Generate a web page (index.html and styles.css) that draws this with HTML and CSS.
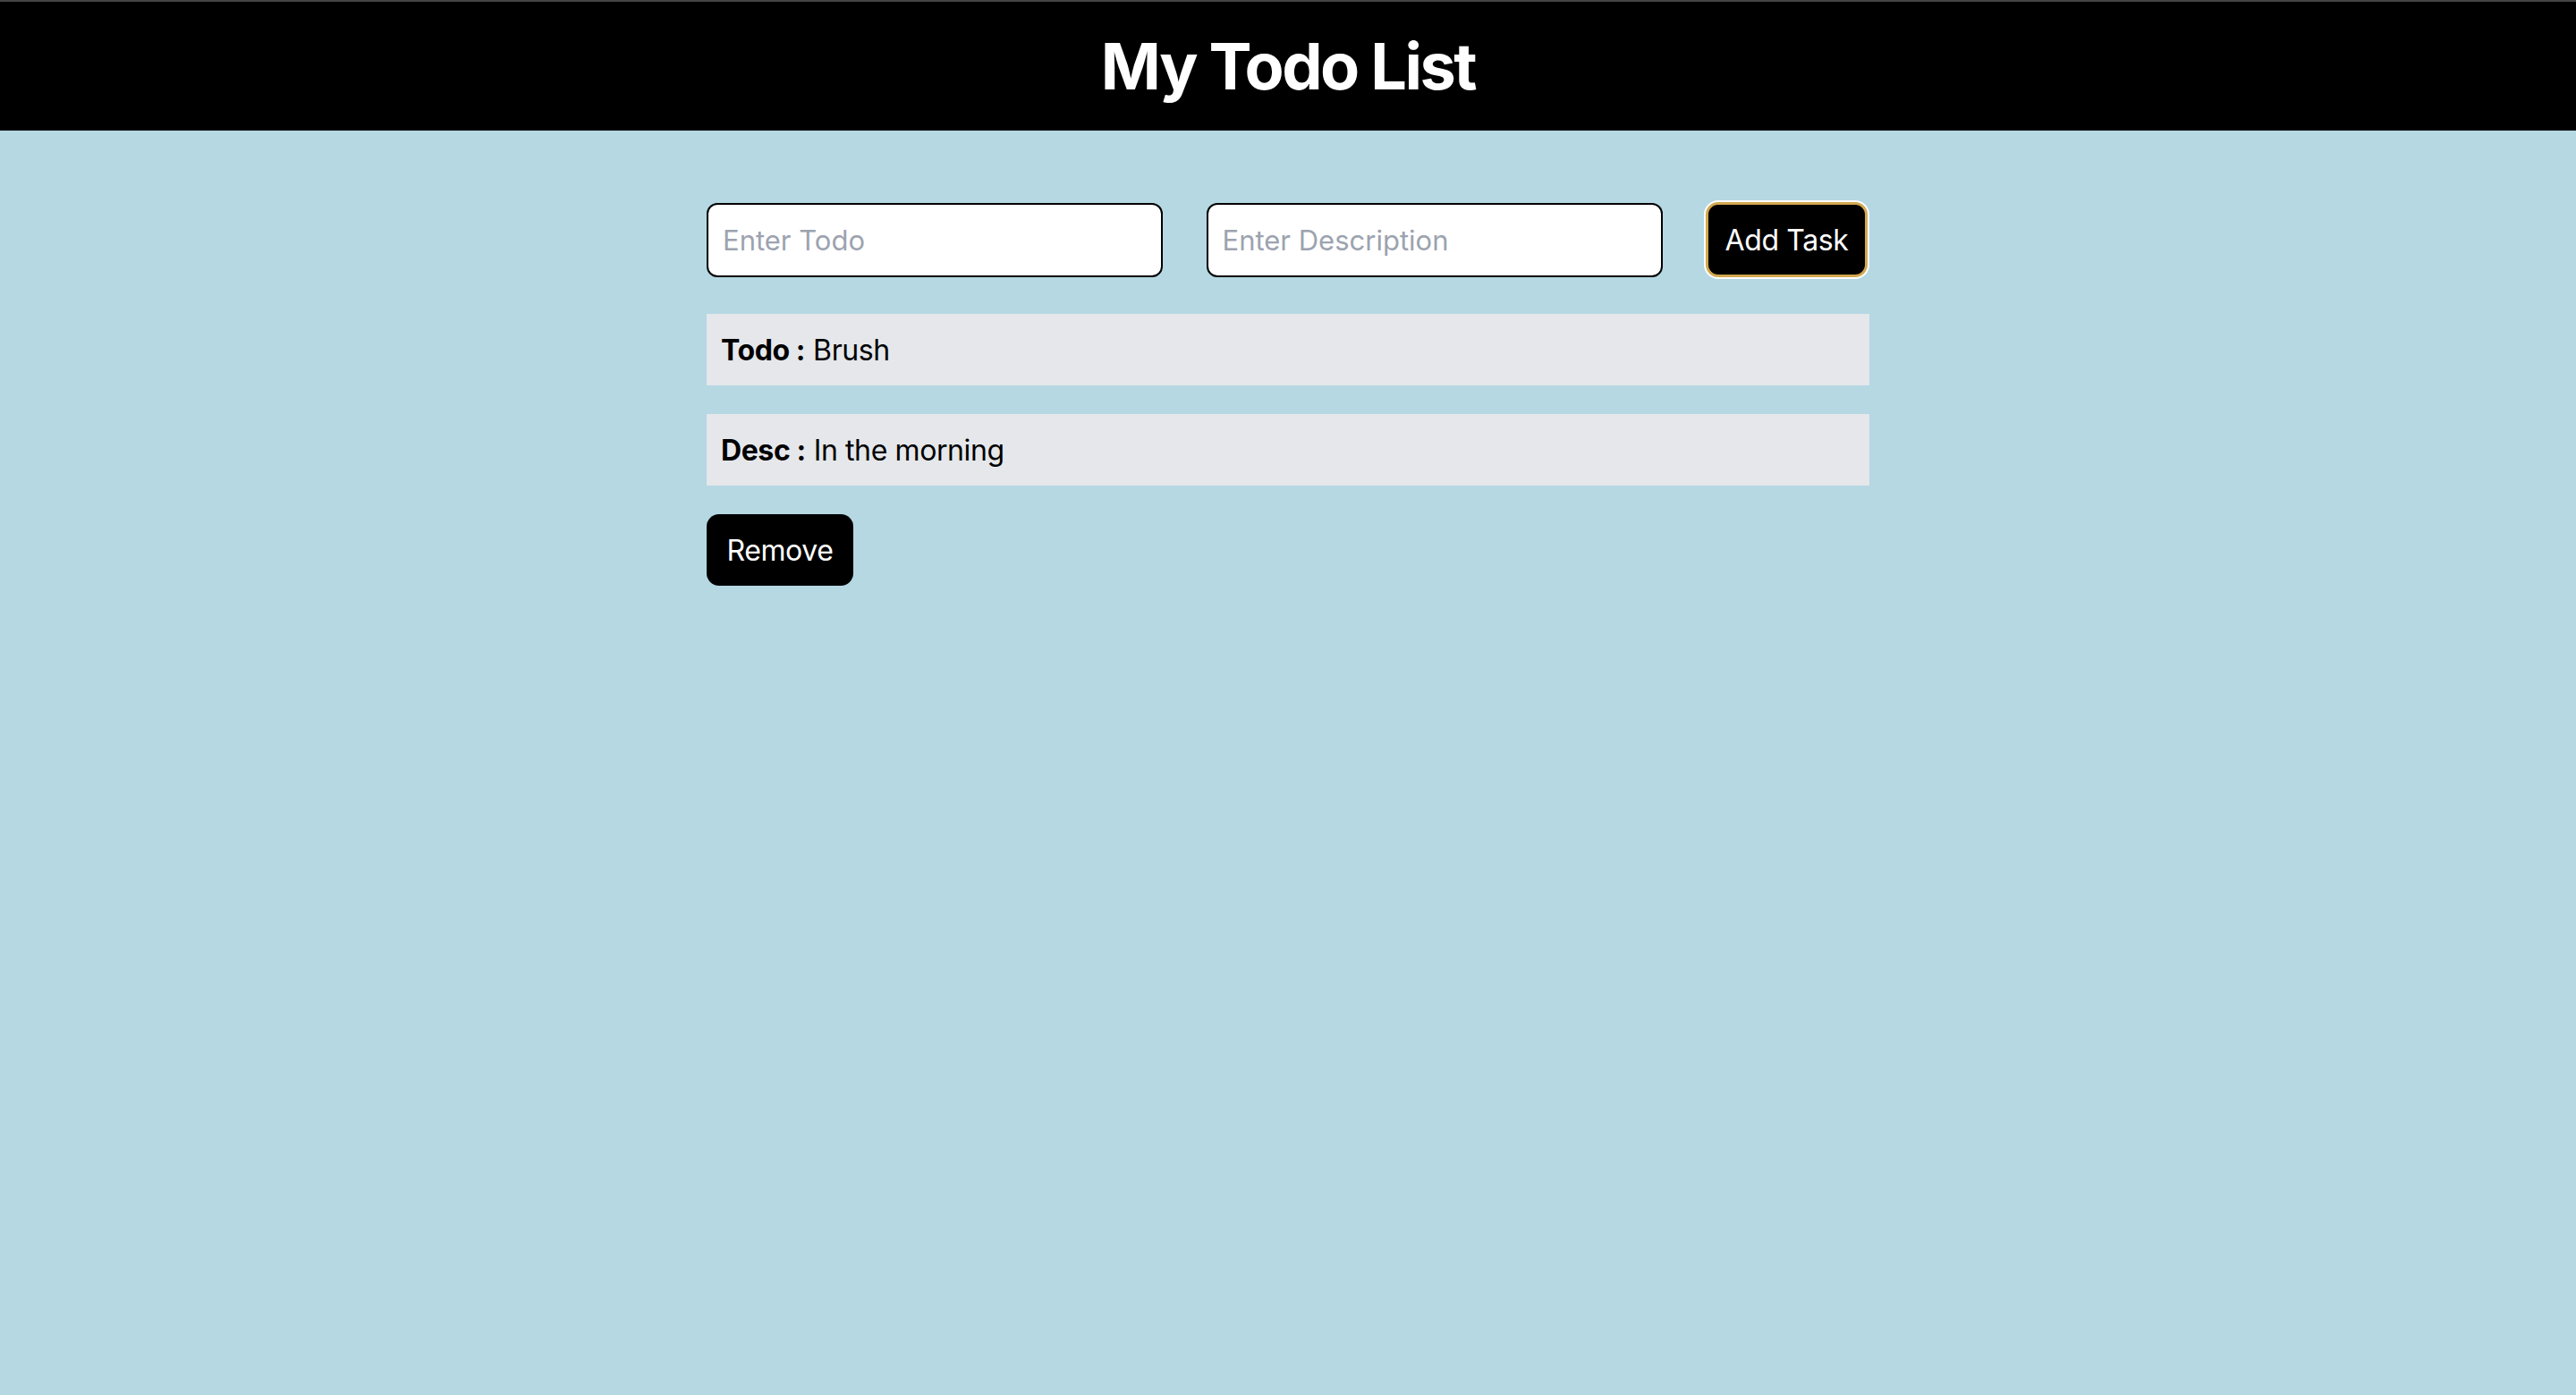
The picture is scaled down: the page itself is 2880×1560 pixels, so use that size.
FILE: index.html
```html
<!DOCTYPE html>
<html lang="en">
<head>
<meta charset="utf-8">
<title>My Todo List</title>
<link rel="stylesheet" href="styles.css">
</head>
<body>
<header class="topbar">
  <h1 class="title">My Todo List</h1>
</header>
<main class="container">
  <div class="form-row">
    <input class="field" type="text" placeholder="Enter Todo">
    <input class="field" type="text" placeholder="Enter Description">
    <button class="btn btn-add">Add Task</button>
  </div>
  <div class="list">
    <div class="item"><strong>Todo :</strong> Brush</div>
    <div class="item"><strong>Desc :</strong> In the morning</div>
    <div class="actions"><button class="btn btn-remove">Remove</button></div>
  </div>
</main>
</body>
</html>
```

FILE: styles.css
```css
* { box-sizing: border-box; }
html, body { margin: 0; padding: 0; }
body {
  background: #b5d8e3;
  font-family: Inter, "Noto Sans", "Liberation Sans", sans-serif;
  color: #000;
  min-height: 1560px;
}
.topbar {
  background: #000;
  border-top: 2px solid #444;
  height: 146px;
  display: flex;
  align-items: center;
  justify-content: center;
}
.title {
  margin: 0;
  color: #fff;
  font-size: 72px;
  font-weight: 700;
  letter-spacing: -2.5px;
  line-height: 1;
}
.container {
  width: 1300px;
  margin: 0 auto;
  padding-top: 80px;
}
.form-row {
  display: flex;
  align-items: center;
  justify-content: space-between;
}
.field {
  width: 510px;
  height: 83px;
  border: 2px solid #000;
  border-radius: 12px;
  background: #fff;
  padding: 0 16px;
  font-family: inherit;
  font-size: 31px;
  color: #000;
  outline: none;
}
.field::placeholder { color: #9ca3af; }
.btn {
  font-family: inherit;
  font-size: 32px;
  letter-spacing: -0.4px;
  color: #fff;
  background: #000;
  cursor: pointer;
}
.btn-add {
  width: 181px;
  height: 84px;
  border: 3px solid #d2a850;
  border-radius: 14px;
  box-shadow: 0 0 0 2px #fff;
  margin-right: 2px;
  padding: 0;
}
.list {
  margin-top: 41px;
  display: flex;
  flex-direction: column;
  gap: 32px;
}
.item {
  background: #e5e7eb;
  height: 80px;
  padding: 0 16px;
  display: flex;
  align-items: center;
  gap: 0.28em;
  font-size: 32px;
  letter-spacing: -0.4px;
}
.item strong { font-weight: 700; }
.actions { display: flex; }
.btn-remove {
  width: 164px;
  height: 80px;
  border: none;
  border-radius: 14px;
  padding: 0;
}
```
